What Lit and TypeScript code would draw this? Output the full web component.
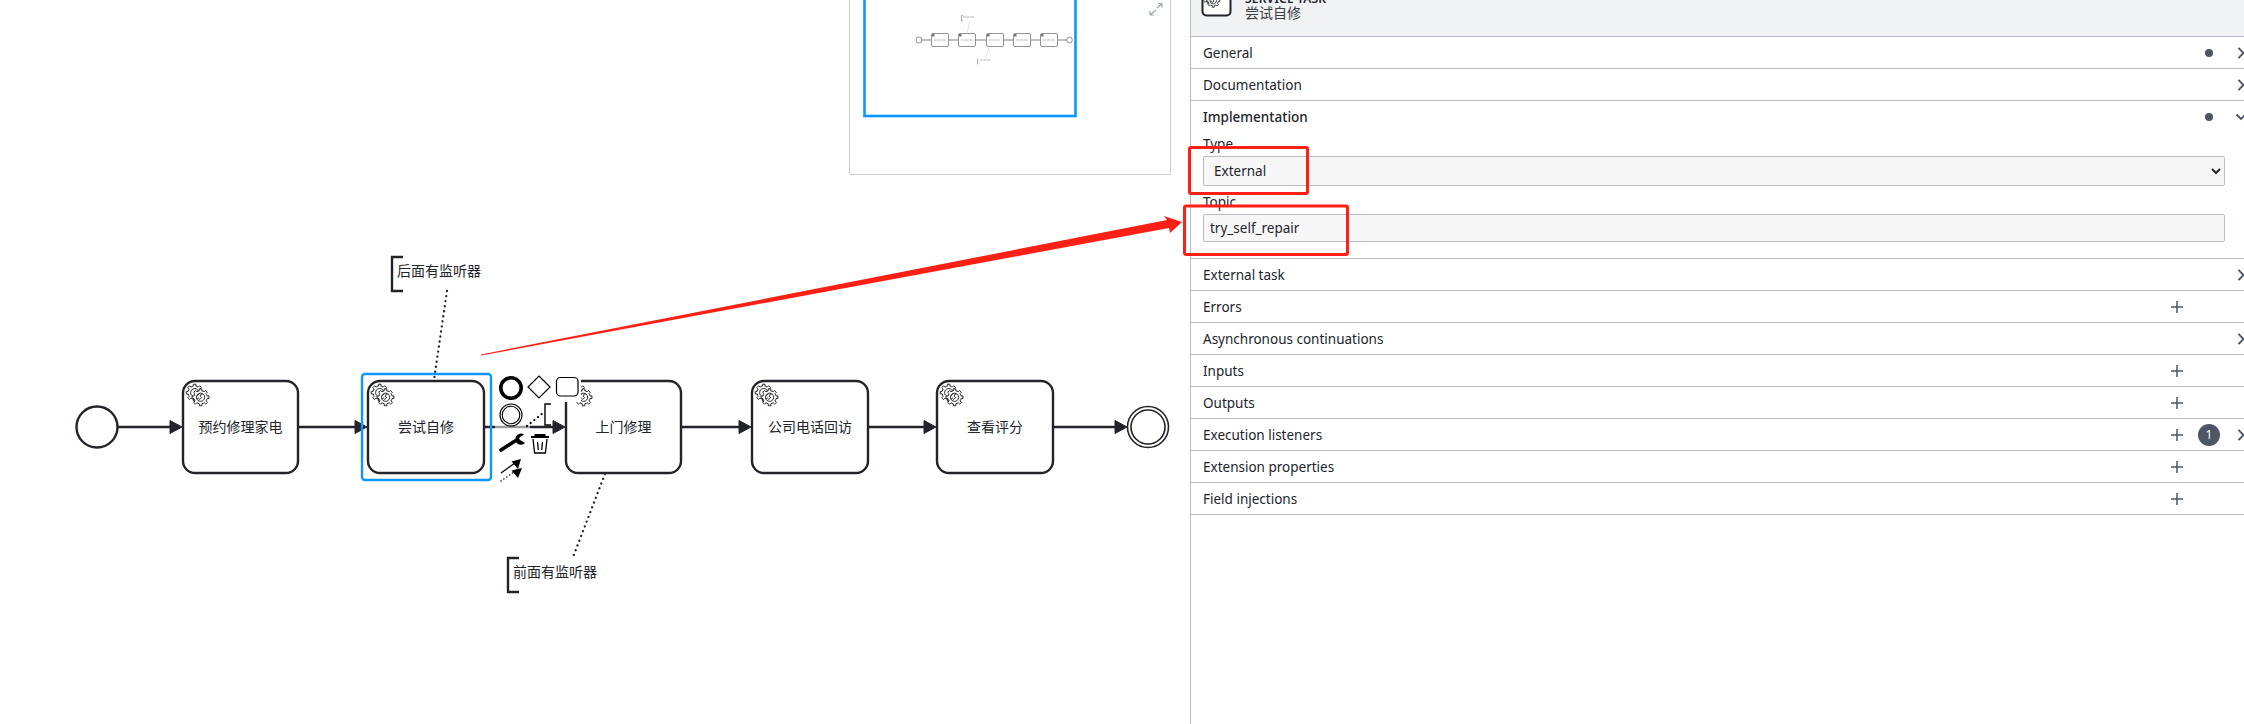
import { LitElement, html, css, svg } from "lit";
import { customElement } from "lit/decorators.js";

const INK = "#22242a";
const GEAR_BODY = "v -1.71335 c 0.352326,-0.0705 0.703932,-0.17838 1.047628,-0.32133 0.344416,-0.14465 0.665822,-0.32133 0.966377,-0.52145 l 1.19431,1.18005 1.567487,-1.57688 -1.195028,-1.18014 c 0.403376,-0.61394 0.683079,-1.29908 0.825447,-2.01824 l 1.622133,-0.01 v -2.2196 l -1.636514,0.01 c -0.07333,-0.35153 -0.178319,-0.70024 -0.323564,-1.04372 -0.145244,-0.34406 -0.321407,-0.6644 -0.522735,-0.96217 l 1.131035,-1.13631 -1.583305,-1.56293 -1.129598,1.13589 c -0.614052,-0.40108 -1.302883,-0.68093 -2.022633,-0.82247 l 0.0093,-1.61852 h -2.241173 l 0.0042,1.63124 c -0.353763,0.0736 -0.705369,0.17977 -1.049785,0.32371 -0.344415,0.14437 -0.665102,0.32092 -0.9635006,0.52046 l -1.1698628,-1.15823 -1.5667691,1.5792 1.1684265,1.15669 c -0.4026573,0.61283 -0.68308,1.29797 -0.8247287,2.01713 l -1.6588041,0.003 v 2.22174 l 1.6724648,-0.006 c 0.073327,0.35077 0.1797598,0.70243 0.3242851,1.04472 0.1452428,0.34448 0.3214064,0.6644 0.5227339,0.96066 l -1.1993431,1.19723 1.5840256,1.56011 1.1964668,-1.19348 c 0.6140517,0.40346 1.3028827,0.68232 2.0233517,0.82331 l 7.19e-4,1.69892 h 2.226848 z m 0.221462,-3.9957 c -1.788948,0.7502 -3.8576,-0.0928 -4.6097055,-1.87438 -0.7521065,-1.78321 0.090598,-3.84627 1.8802645,-4.59604 1.78823,-0.74936 3.856881,0.0929 4.608987,1.87437 0.752106,1.78165 -0.0906,3.84612 -1.879546,4.59605 z";
const gearPath = (x: number, y: number) => `m ${x},${y} ${GEAR_BODY}`;

const gears = (x: number, y: number, k: number) => svg`
  <g transform="translate(${x} ${y}) scale(${k})" stroke="${INK}" stroke-width="0.85" fill="#fff">
    <path d=${gearPath(12, 18)}></path>
    <path d=${gearPath(17, 22)}></path>
  </g>`;

const TASKS = [
  { x: 183, w: 115, label: "预约修理家电" },
  { x: 368, w: 116, label: "尝试自修" },
  { x: 566, w: 115, label: "上门修理" },
  { x: 752, w: 116, label: "公司电话回访" },
  { x: 937, w: 116, label: "查看评分" },
];
const FLOWS: [number, number][] = [
  [118, 182], [299, 367], [485, 565], [682, 751], [869, 936], [1053, 1127],
];

interface Row {
  title: string;
  dot?: boolean;
  add?: boolean;
  badge?: string;
  chevron?: boolean;
  open?: boolean;
}
const ROWS: Row[] = [
  { title: "General", dot: true, chevron: true },
  { title: "Documentation", chevron: true },
  { title: "Implementation", dot: true, chevron: true, open: true },
  { title: "External task", chevron: true },
  { title: "Errors", add: true },
  { title: "Asynchronous continuations", chevron: true },
  { title: "Inputs", add: true },
  { title: "Outputs", add: true },
  { title: "Execution listeners", add: true, badge: "1", chevron: true },
  { title: "Extension properties", add: true },
  { title: "Field injections", add: true },
];

@customElement("app-root")
export class AppRoot extends LitElement {
  static styles = css`
    :host {
      display: flex;
      width: 2244px;
      height: 724px;
      position: relative;
      overflow: hidden;
      background: #fff;
      font-family: "Noto Sans", "Noto Sans CJK SC", sans-serif;
      color: #22242a;
    }
    .canvas {
      flex: 0 0 1190px;
      position: relative;
      height: 724px;
      overflow: hidden;
    }
    .diagram {
      display: block;
    }
    .label {
      font: 14px "Noto Sans CJK SC", "Noto Sans", sans-serif;
      fill: #22242a;
    }
    .minimap {
      position: absolute;
      left: 849px;
      top: 0;
      width: 322px;
      height: 175px;
      border: 1px solid #ccc;
      border-top: none;
      box-sizing: border-box;
      border-radius: 0 0 2px 2px;
    }
    .minimap svg {
      display: block;
    }
    .panel {
      flex: 0 0 1067px;
      width: 1067px;
      box-sizing: border-box;
      border-left: 1px solid #b9bcc6;
      height: 724px;
    }
    .head-clip {
      height: 37px;
      overflow: hidden;
    }
    .head {
      box-sizing: border-box;
      height: 37px;
      background: #f1f2f4;
      border-bottom: 1px solid #b9bcc6;
      display: flex;
      align-items: flex-end;
      gap: 12px;
      padding: 0 0 18px 10px;
    }
    .head-icon {
      flex: none;
      display: block;
    }
    .head-text {
      margin-bottom: -1px;
      line-height: 15px;
    }
    .head-type {
      font-size: 12px;
      font-weight: 600;
      letter-spacing: 0.2px;
      white-space: nowrap;
    }
    .head-name {
      font: 14px/13px "Noto Sans CJK SC", sans-serif;
      color: #3a3d45;
    }
    .group {
      border-bottom: 1px solid #b9bcc6;
    }
    .row {
      box-sizing: border-box;
      height: 31px;
      display: flex;
      align-items: center;
      padding-left: 12px;
      font-size: 13.5px;
    }
    .row.open .title {
      font-weight: 500;
    }
    .title {
      flex: 1;
      white-space: nowrap;
    }
    .slot {
      flex: 0 0 32px;
      height: 31px;
      display: flex;
      align-items: center;
      justify-content: center;
    }
    .slot svg {
      display: block;
      overflow: visible;
    }
    .dot {
      width: 8px;
      height: 8px;
      border-radius: 50%;
      background: #4e5565;
    }
    .badge {
      width: 22px;
      height: 22px;
      border-radius: 50%;
      background: #4e5565;
      color: #fff;
      font-size: 12px;
      display: flex;
      align-items: center;
      justify-content: center;
    }
    .body {
      padding: 3px 32px 16px 12px;
    }
    .field-label {
      display: block;
      font-size: 13.5px;
      line-height: 18px;
      margin-bottom: 3px;
    }
    .field + .field {
      margin-top: 7px;
    }
    select,
    input {
      display: block;
      width: 100%;
      box-sizing: border-box;
      border: 1px solid #b9bcc6;
      border-radius: 2px;
      background-color: #f7f7f8;
      font-family: "Noto Sans", sans-serif;
      font-size: 13.5px;
      color: #22242a;
      margin: 0;
      outline: none;
    }
    select {
      height: 30px;
      padding: 0 0 0 6px;
    }
    input {
      height: 28px;
      padding: 0 6px;
    }
    .marks {
      position: absolute;
      left: 0;
      top: 0;
      pointer-events: none;
    }
  `;

  private renderDiagram() {
    return html`
      <svg class="diagram" width="1190" height="724" viewBox="0 0 1190 724">
        <!-- annotations -->
        <path d="M403 257 H392 V291 H403" fill="none" stroke=${INK} stroke-width="2.4"></path>
        <text class="label" x="397" y="270" dominant-baseline="central">后面有监听器</text>
        <path d="M447 291 L434 380" stroke=${INK} stroke-width="2.3" stroke-linecap="round" stroke-dasharray="0.1 5" fill="none"></path>
        <path d="M519 558 H508 V592 H519" fill="none" stroke=${INK} stroke-width="2.4"></path>
        <text class="label" x="513" y="571" dominant-baseline="central">前面有监听器</text>
        <path d="M605 474 L573 557" stroke=${INK} stroke-width="2.3" stroke-linecap="round" stroke-dasharray="0.1 5" fill="none"></path>

        <!-- events -->
        <circle cx="97" cy="427" r="20.5" fill="#fff" stroke=${INK} stroke-width="2.4"></circle>
        <circle cx="1148" cy="427" r="20.5" fill="#fff" stroke=${INK} stroke-width="1.6"></circle>
        <circle cx="1148" cy="427" r="17" fill="#fff" stroke=${INK} stroke-width="1.6"></circle>

        <!-- flows -->
        ${FLOWS.map(
          ([a, b]) => svg`
            <path d="M${a} 427 H${b - 8}" stroke=${INK} stroke-width="2.4" fill="none"></path>
            <path d="M${b - 12} 420.5 L${b} 427 L${b - 12} 433.5 Z" fill=${INK} stroke=${INK} stroke-width="1"></path>
          `,
        )}

        <!-- tasks -->
        ${TASKS.map(
          (t) => svg`
            <rect x=${t.x} y="381" width=${t.w} height="92" rx="12" fill="#fff" stroke=${INK} stroke-width="2.4"></rect>
            ${gears(t.x - 1, 380, 1.17)}
            <text class="label" x=${t.x + t.w / 2} y="426" text-anchor="middle" dominant-baseline="central">${t.label}</text>
          `,
        )}

        <!-- selection -->
        <rect x="362" y="374" width="129" height="106" rx="3" fill="none" stroke="#0f96fa" stroke-width="2.4"></rect>

        <!-- context pad -->
        <rect x="553" y="372" width="28" height="30" fill="#fff" opacity="0.96"></rect>
        <rect x="495" y="420" width="35" height="14" fill="#fff" opacity="0.55"></rect>
        <circle cx="511" cy="388" r="10.2" fill="#fff" stroke="#000" stroke-width="3.6"></circle>
        <path d="M539 376 L550 387 L539 398 L528 387 Z" fill="#fff" stroke="#000" stroke-width="1.2"></path>
        <rect x="556.5" y="377.5" width="21.5" height="18.5" rx="4" fill="#fff" stroke="#000" stroke-width="1.2"></rect>
        <circle cx="511" cy="415" r="11" fill="#fff" stroke="#000" stroke-width="1.1"></circle>
        <circle cx="511" cy="415" r="8.8" fill="#fff" stroke="#000" stroke-width="1.1"></circle>
        <path d="M527 426 L543 413" stroke="#000" stroke-width="2.2" stroke-linecap="round" stroke-dasharray="0.1 4.6" fill="none"></path>
        <path d="M551 404 H545 V425 H551" fill="none" stroke="#000" stroke-width="1.4"></path>
        <path d="M501 450 L515 441" stroke="#000" stroke-width="3.6" stroke-linecap="round" fill="none"></path>
        <path d="M524 434.5 A5.6 5.6 0 1 0 525 443 L521 440.5 A2 2 0 0 1 520 437 Z" fill="#000"></path>
        <path d="M531 437 H549 M535.5 436.5 V435 H544.5 V436.5" stroke="#000" stroke-width="2" fill="none"></path>
        <path d="M533 439 L534.6 453 H545.4 L547 439" fill="#fff" stroke="#000" stroke-width="1.3"></path>
        <path d="M537.5 442 L538.3 450 M542.5 442 L541.7 450" stroke="#000" stroke-width="1.3" fill="none"></path>
        <path d="M501 473 L515 463" stroke="#000" stroke-width="1.2" fill="none"></path>
        <path d="M521 459 L518 469 L511.5 461.5 Z" fill="#000"></path>
        <path d="M501 481 L514 472" stroke="#000" stroke-width="1.4" stroke-linecap="round" stroke-dasharray="0.1 3.4" fill="none"></path>
        <path d="M522 468 L518 478 L511.5 470.5 Z" fill="#000"></path>
      </svg>
      <div class="minimap">
        <svg width="322" height="175" viewBox="849 0 322 175">
          <rect x="863.5" y="-5" width="211" height="121" fill="none" stroke="#0f96fa" stroke-width="2.6"></rect>
          <path d="M921 40 H1066" stroke="#aaa" stroke-width="1.6"></path>
          <circle cx="918" cy="40" r="3" fill="#fff" stroke="#777" stroke-width="0.8"></circle>
          <circle cx="1068.5" cy="40" r="2.8" fill="#fff" stroke="#777" stroke-width="0.8"></circle>
          ${[930, 957, 985, 1012, 1039].map(
            (x) => svg`
              <rect x=${x + 0.5} y="33.5" width="17" height="13" rx="1.5" fill="#fff" stroke="#777" stroke-width="0.8"></rect>
              <rect x=${x + 1} y="34" width="2.5" height="2.5" fill="#777"></rect>
              <path d="M${x + 3} 40 H${x + 15}" stroke="#89a" stroke-width="0.9" stroke-dasharray="0.8 0.5"></path>
            `,
          )}
          <path d="M962 15.5 H960.5 V21 H962 M977.5 59 H976.5 V64 H977.5" fill="none" stroke="#777" stroke-width="0.6"></path>
          <path d="M962 17 H973 M979 60 H990" stroke="#999" stroke-width="1" stroke-dasharray="0.8 0.5"></path>
          <path d="M969 21 L966 33 M988 47 L985 58" stroke="#ccc" stroke-width="0.6"></path>
          <path d="M1149 15 L1155 10 M1149 15 V11 M1149 15 H1153 M1161 3.5 L1156 8 M1161 3.5 V7.5 M1161 3.5 H1157" stroke="#9aa" stroke-width="1.2" fill="none"></path>
        </svg>
      </div>
    `;
  }

  private renderRow(r: Row) {
    return html`
      <div class="group">
        <div class="row ${r.open ? "open" : ""}">
          <span class="title">${r.title}</span>
          <span class="slot">
            ${r.add
              ? html`<svg width="12" height="12" viewBox="0 0 12 12"><path d="M6 0 V12 M0 6 H12" stroke="#4e5565" stroke-width="1.5"></path></svg>`
              : null}
          </span>
          <span class="slot">
            ${r.badge
              ? html`<span class="badge">${r.badge}</span>`
              : r.dot
                ? html`<span class="dot"></span>`
                : null}
          </span>
          <span class="slot">
            ${r.chevron
              ? r.open
                ? html`<svg width="12" height="8" viewBox="0 0 12 8"><path d="M1.5 1.5 L6 6 L10.5 1.5" fill="none" stroke="#4e5565" stroke-width="1.8"></path></svg>`
                : html`<svg width="8" height="12" viewBox="0 0 8 12"><path d="M1.5 0.8 L6.5 6 L1.5 11.2" fill="none" stroke="#4e5565" stroke-width="1.9"></path></svg>`
              : null}
          </span>
        </div>
        ${r.open
          ? html`<div class="body">
              <div class="field">
                <label class="field-label">Type</label>
                <select><option>External</option></select>
              </div>
              <div class="field">
                <label class="field-label">Topic</label>
                <input value="try_self_repair" />
              </div>
            </div>`
          : null}
      </div>
    `;
  }

  render() {
    return html`
      <div class="canvas">${this.renderDiagram()}</div>
      <div class="panel">
        <div class="head-clip">
          <div class="head">
            <svg class="head-icon" width="32" height="32" viewBox="0 0 32 32">
              <rect x="1.5" y="1.5" width="28" height="28" rx="4" fill="#fff" stroke=${INK} stroke-width="2"></rect>
              <g transform="translate(-2 5) scale(.9)" stroke=${INK} stroke-width="1" fill="#fff">
                <path d=${gearPath(12, 14)}></path>
                <path d=${gearPath(17, 18)}></path>
              </g>
            </svg>
            <div class="head-text">
              <div class="head-type">SERVICE TASK</div>
              <div class="head-name">尝试自修</div>
            </div>
          </div>
        </div>
        ${ROWS.map((r) => this.renderRow(r))}
      </div>
      <svg class="marks" width="2244" height="724" viewBox="0 0 2244 724">
        <rect x="1189.5" y="147.5" width="118" height="46" rx="1.5" fill="none" stroke="#ff2015" stroke-width="3"></rect>
        <rect x="1184.5" y="206" width="163" height="48.5" rx="1.5" fill="none" stroke="#ff2015" stroke-width="3"></rect>
        <path d="M481 355.6 L481 354.4 L1167 220 L1164 216 L1182 222 L1170 233 L1169 228 Z" fill="#ff2015"></path>
      </svg>
    `;
  }
}
